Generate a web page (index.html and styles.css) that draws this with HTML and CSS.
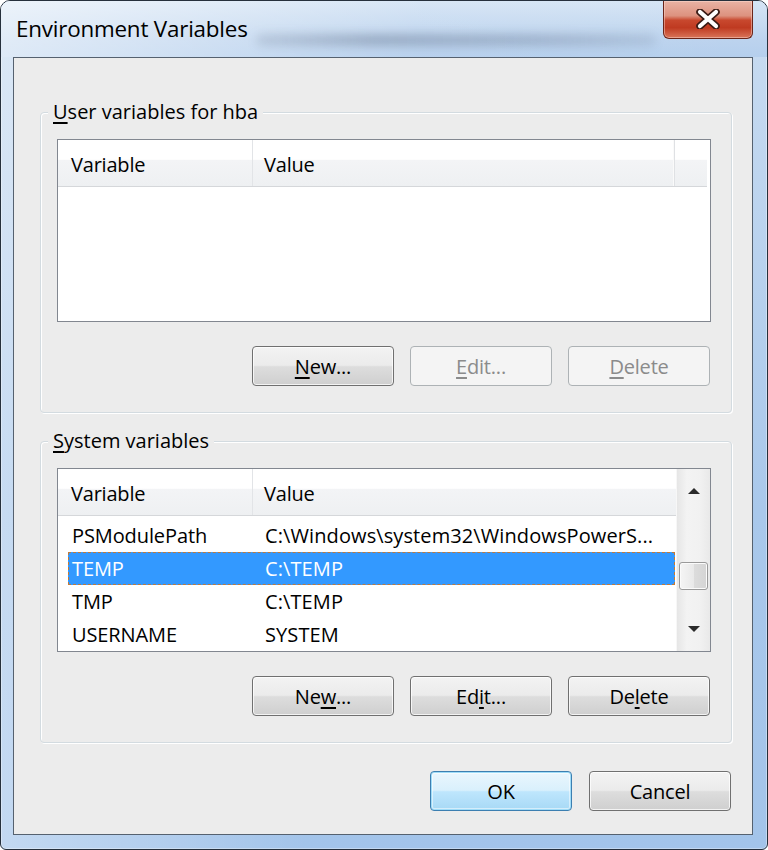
FILE: index.html
```html
<!DOCTYPE html>
<html lang="en">
<head>
<meta charset="utf-8">
<title>Environment Variables</title>
<link rel="stylesheet" href="styles.css">
</head>
<body>
<div class="window">
  <div class="titlebar">
    <span class="title">Environment Variables</span>
    <span class="glass-blur" aria-hidden="true"></span>
    <button class="close" aria-label="Close">
      <svg width="28" height="20" viewBox="0 0 28 20">
        <path d="M6 3 L22 17 M22 3 L6 17" stroke="#3a1b15" stroke-width="7.5" stroke-linecap="round" fill="none"/>
        <path d="M6 3 L22 17 M22 3 L6 17" stroke="#ffffff" stroke-width="4.2" stroke-linecap="round" fill="none"/>
      </svg>
    </button>
  </div>
  <div class="frame">
    <div class="client">
      <fieldset class="group group-user">
        <legend><u>U</u>ser variables for hba</legend>
        <div class="listview lv-user">
          <div class="lv-header">
            <div class="col col-var">Variable</div>
            <div class="col col-val">Value</div>
            <div class="col col-fill"></div>
          </div>
        </div>
        <div class="btn-row">
          <button class="btn"><u>N</u>ew...</button>
          <button class="btn disabled"><u>E</u>dit...</button>
          <button class="btn disabled"><u>D</u>elete</button>
        </div>
      </fieldset>

      <fieldset class="group group-system">
        <legend><u>S</u>ystem variables</legend>
        <div class="listview lv-system">
          <div class="lv-main">
            <div class="lv-header">
              <div class="col col-var">Variable</div>
              <div class="col col-val2">Value</div>
            </div>
            <div class="lv-rows">
              <div class="row"><span class="cell c1">PSModulePath</span><span class="cell c2">C:\Windows\system32\WindowsPowerS...</span></div>
              <div class="row selected"><span class="cell c1">TEMP</span><span class="cell c2">C:\TEMP</span></div>
              <div class="row"><span class="cell c1">TMP</span><span class="cell c2">C:\TEMP</span></div>
              <div class="row"><span class="cell c1">USERNAME</span><span class="cell c2">SYSTEM</span></div>
            </div>
          </div>
          <div class="scrollbar">
            <div class="sb-arrow">
              <svg width="14" height="8" viewBox="0 0 14 8"><path d="M1 7 L7 1 L13 7 Z" fill="#2a2a2a"/></svg>
            </div>
            <div class="sb-track">
              <div class="sb-thumb"></div>
            </div>
            <div class="sb-arrow">
              <svg width="14" height="8" viewBox="0 0 14 8"><path d="M1 1 L13 1 L7 7 Z" fill="#2a2a2a"/></svg>
            </div>
          </div>
        </div>
        <div class="btn-row">
          <button class="btn">Ne<u>w</u>...</button>
          <button class="btn">Ed<u>i</u>t...</button>
          <button class="btn">De<u>l</u>ete</button>
        </div>
      </fieldset>

      <div class="btn-row dialog-buttons">
        <button class="btn default">OK</button>
        <button class="btn">Cancel</button>
      </div>
    </div>
  </div>
</div>
</body>
</html>
```
FILE: styles.css
```css
* { box-sizing: border-box; }

html, body {
  margin: 0;
  padding: 0;
  background: #ffffff;
}

body {
  font-family: "Open Sans", "Noto Sans", "Liberation Sans", sans-serif;
  font-size: 20px;
  color: #000;
}

.window {
  width: 768px;
  height: 850px;
  display: flex;
  flex-direction: column;
  border: 1px solid #26303c;
  border-radius: 10px 10px 6px 6px;
  overflow: hidden;
  background:
    linear-gradient(to right, rgba(255,255,255,0.35), rgba(255,255,255,0) 40%),
    linear-gradient(#c9dcf1, #a9c8eb 60%, #a3c4ea);
  box-shadow: inset 0 0 0 1px rgba(255,255,255,0.35);
}

.titlebar {
  height: 56px;
  flex: none;
  display: flex;
  align-items: flex-start;
  padding-left: 15px;
  background:
    linear-gradient(to right, rgba(255,255,255,0.55), rgba(255,255,255,0.05) 55%, rgba(255,255,255,0) 100%),
    linear-gradient(#d6e5f5, #bcd3ee 70%, #b5cfed);
}

.title {
  margin-top: 15px;
  line-height: 26px;
  font-size: 22.4px;
  letter-spacing: -0.2px;
  color: #000;
  white-space: nowrap;
}

.glass-blur {
  width: 400px;
  height: 12px;
  margin-top: 33px;
  margin-left: 8px;
  background: linear-gradient(to right, rgba(70,85,110,0.15), rgba(70,85,110,0.32) 30%, rgba(70,85,110,0.25) 70%, rgba(70,85,110,0.12));
  filter: blur(5px);
  border-radius: 6px;
}

.close {
  margin-left: auto;
  margin-right: 14px;
  width: 90px;
  height: 38px;
  padding: 0;
  border: 1px solid #6b2519;
  border-top: none;
  border-radius: 0 0 6px 6px;
  background: linear-gradient(#e9b3a4 0%, #dd927f 40%, #c8482e 52%, #bf3a21 72%, #d9755a 100%);
  box-shadow: inset 0 0 0 1px rgba(255, 225, 215, 0.45);
  display: flex;
  align-items: center;
  justify-content: center;
}

.close svg { display: block; margin-top: -1px; }

.frame {
  flex: 1;
  display: flex;
  padding: 0 14px 14px 12px;
}

.client {
  flex: 1;
  display: flex;
  flex-direction: column;
  border: 1px solid #55616f;
  background: #ececec;
  padding: 42px 20px 0 26px;
}

.group {
  margin: 0;
  border: 1px solid #d3dbe0;
  border-radius: 4px;
  padding: 15px 20px 26px 16px;
  box-shadow: inset 1px 1px 0 #ffffff, 1px 1px 0 #ffffff;
  min-width: 0;
}

.group legend {
  margin-left: -9px;
  padding: 0 5px;
  line-height: 24px;
  background: #ececec;
}

.group-system { margin-top: 16px; }

u {
  text-decoration-thickness: 2px;
  text-underline-offset: 3px;
}

.listview {
  border: 1px solid #828790;
  background: #ffffff;
  overflow: hidden;
}

.lv-user { height: 183px; }
.lv-system { height: 184px; display: flex; }

.lv-header {
  height: 47px;
  display: flex;
  border-bottom: 1px solid #d5d7da;
  background: linear-gradient(#ffffff 0%, #ffffff 42%, #f3f4f6 44%, #eef0f2 100%);
  letter-spacing: -0.2px;
}

.lv-user .lv-header { margin-right: 3px; }

.col {
  line-height: 46px;
  padding-top: 2px;
  white-space: nowrap;
}

.col-var {
  width: 195px;
  padding-left: 13px;
  border-right: 1px solid #e2e4e7;
}

.col-val {
  width: 422px;
  padding-left: 11px;
  border-right: 1px solid #dfe1e4;
  box-shadow: inset -1px 0 0 #fafafa;
}

.col-val2 {
  flex: 1;
  padding-left: 11px;
}

.col-fill { flex: 1; }

.lv-main {
  flex: 1;
  min-width: 0;
  display: flex;
  flex-direction: column;
}

.lv-rows {
  padding-top: 3px;
  flex: 1;
  overflow: hidden;
}

.row {
  height: 33px;
  margin-left: 10px;
  margin-right: 1px;
  display: flex;
  align-items: center;
  padding-left: 3px;
  border: 1px solid transparent;
  white-space: nowrap;
}

.row .c1 { width: 193px; letter-spacing: -0.1px; }
.row .c2 { flex: 1; letter-spacing: 0.1px; }

.row.selected {
  background: #3399ff;
  color: #ffffff;
  border: 1px dashed #c27a38;
}

.scrollbar {
  width: 34px;
  flex: none;
  display: flex;
  flex-direction: column;
  background: linear-gradient(to right, #e6e6e6, #f3f3f3 30%, #f1f1f1 70%, #e9e9e9);
  border-left: 1px solid #f7f7f7;
}

.sb-arrow {
  height: 44px;
  display: flex;
  align-items: center;
  justify-content: center;
}

.sb-track {
  flex: 1;
  padding-top: 49px;
}

.sb-thumb {
  margin: 0 2px;
  height: 28px;
  border: 1px solid #9a9a9a;
  border-radius: 3px;
  background: linear-gradient(to right, #f5f5f5, #e9e9e9 50%, #dcdcdc 52%, #d4d4d4);
  box-shadow: inset 0 0 0 1px #fbfbfb;
}

.btn-row {
  display: flex;
  justify-content: flex-end;
  gap: 16px;
  margin-top: 24px;
  padding-right: 1px;
}

.btn {
  width: 142px;
  height: 40px;
  padding: 0;
  font-family: inherit;
  font-size: 20px;
  letter-spacing: -0.2px;
  color: #000;
  border: 1px solid #707070;
  border-radius: 4px;
  background: linear-gradient(#f3f3f3 0%, #ebebeb 48%, #dddddd 52%, #cfcfcf 100%);
  box-shadow: inset 0 0 0 1px rgba(255,255,255,0.75);
}

.btn.disabled {
  color: #8b8b8b;
  border-color: #adb2b5;
  background: #f4f4f4;
  box-shadow: none;
}

.btn.default {
  border-color: #3c7fb1;
  background: linear-gradient(#eaf6fd 0%, #d9f0fc 48%, #bee6fd 52%, #a7d9f5 100%);
  box-shadow: inset 0 0 0 1px #9fdcf8, inset 0 0 0 2px rgba(255,255,255,0.5);
}

.dialog-buttons {
  margin-top: 28px;
  gap: 17px;
}
```
